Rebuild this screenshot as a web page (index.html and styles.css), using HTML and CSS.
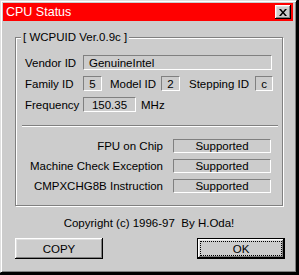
FILE: index.html
```html
<!DOCTYPE html>
<html>

<head>
  <title>CPU Status</title>
  <link rel="stylesheet" href="styles.css">
</head>

<body>
  <div class="window">
    <div class="titlebar">
      <span class="title">CPU Status</span>
      <span class="close-btn">
        <svg width="8" height="7" viewBox="0 0 8 7">
          <path d="M0 0h2l2 2.5l2-2.5h2l-3 3.5l3 3.5h-2l-2-2.5l-2 2.5h-2l3-3.5z" fill="#000"/>
        </svg>
      </span>
    </div>

    <div class="content">
      <fieldset class="group">
        <legend>[ WCPUID Ver.0.9c ]</legend>

        <div class="row">
          <span class="label">Vendor ID</span>
          <span class="field vendor">GenuineIntel</span>
        </div>
        <div class="row">
          <span class="label">Family ID</span>
          <span class="field small">5</span>
          <span class="label model">Model ID</span>
          <span class="field small">2</span>
          <span class="label stepping">Stepping ID</span>
          <span class="field tiny">c</span>
        </div>
        <div class="row">
          <span class="label">Frequency</span>
          <span class="field freq">150.35</span>
          <span class="unit">MHz</span>
        </div>

        <div class="separator"></div>

        <div class="feature">
          <span class="feature-label">FPU on Chip</span>
          <span class="field support">Supported</span>
        </div>
        <div class="feature">
          <span class="feature-label">Machine Check Exception</span>
          <span class="field support">Supported</span>
        </div>
        <div class="feature">
          <span class="feature-label">CMPXCHG8B Instruction</span>
          <span class="field support">Supported</span>
        </div>
      </fieldset>

      <p class="copyright">Copyright (c) 1996-97&nbsp; By H.Oda!</p>

      <div class="buttons">
        <button class="btn">COPY</button>
        <button class="btn default"><span class="focus">OK</span></button>
      </div>
    </div>
  </div>
</body>

</html>
```

FILE: styles.css
```css
* {
  box-sizing: border-box;
}

body {
  margin: 0;
  background-color: #000000;
  font-family: "Liberation Sans", Arial, sans-serif;
  font-size: 11.5px;
  color: #000000;
}

/* Janela */
.window {
  width: 297px;
  height: 273px;
  padding: 2px;
  background-color: #cccccc;
  border: 1px solid;
  border-color: #dfdfdf #000000 #000000 #dfdfdf;
  box-shadow: inset 1px 1px 0 #ffffff, inset -1px -1px 0 #808080;
}

.titlebar {
  height: 18px;
  margin-right: 1px;
  padding: 0 2px 0 3px;
  display: flex;
  align-items: center;
  justify-content: space-between;
  background-color: #ff0000;
}

.title {
  color: #ffffff;
  font-size: 12.5px;
}

.close-btn {
  width: 16px;
  height: 14px;
  display: flex;
  align-items: center;
  justify-content: center;
  background-color: #cccccc;
  box-shadow: inset -1px -1px 0 #000000, inset 1px 1px 0 #ffffff,
    inset -2px -2px 0 #808080, inset 2px 2px 0 #dfdfdf;
}

.content {
  padding: 0 11px 0 12px;
}

/* Grupo */
.group {
  margin: 9px 0 0 0;
  padding: 0 0 12px 0;
  border: 1px solid #808080;
  box-shadow: inset 1px 1px 0 #ffffff, 1px 1px 0 #ffffff;
}

.group legend {
  margin-left: 5px;
  padding: 0 2px;
  line-height: 14px;
  background-color: #cccccc;
}

.row {
  height: 15px;
  margin-top: 6px;
  padding-left: 9px;
  display: flex;
  align-items: center;
}

.row:first-of-type {
  margin-top: 11px;
}

.label {
  width: 58px;
  white-space: nowrap;
}

.label.model {
  width: 51px;
  margin-left: 8px;
}

.label.stepping {
  width: 66px;
  margin-left: 9px;
}

.field {
  height: 100%;
  display: flex;
  align-items: center;
  justify-content: center;
  border: 1px solid;
  border-color: #808080 #ffffff #ffffff #808080;
  white-space: nowrap;
}

.field.vendor {
  width: 189px;
  justify-content: flex-start;
  padding-left: 5px;
}

.field.small {
  width: 19px;
}

.field.tiny {
  width: 18px;
}

.field.freq {
  width: 53px;
}

.unit {
  margin-left: 5px;
}

.separator {
  height: 2px;
  margin: 13px 4px 0 6px;
  border-top: 1px solid #808080;
  border-bottom: 1px solid #ffffff;
}

.feature {
  height: 14px;
  margin-top: 6px;
  display: flex;
  align-items: center;
}

.separator + .feature {
  margin-top: 12px;
}

.feature-label {
  width: 147px;
  margin-right: 10px;
  text-align: right;
  white-space: nowrap;
}

.field.support {
  width: 98px;
}

/* Rodapé */
.copyright {
  margin: 10px 0 0 0;
  line-height: 14px;
  text-align: center;
}

.buttons {
  margin: 8px -2px 0 0;
  display: flex;
  justify-content: space-between;
}

.btn {
  width: 88px;
  height: 21px;
  padding: 0;
  border: none;
  background-color: #cccccc;
  font-family: inherit;
  font-size: 11.5px;
  color: #000000;
  box-shadow: inset -1px -1px 0 #000000, inset 1px 1px 0 #ffffff,
    inset -2px -2px 0 #808080, inset 2px 2px 0 #dfdfdf;
}

.btn.default {
  padding: 2px;
  border: 1px solid #000000;
}

.btn .focus {
  height: 100%;
  display: flex;
  align-items: center;
  justify-content: center;
  border: 1px dotted #000000;
}
```
